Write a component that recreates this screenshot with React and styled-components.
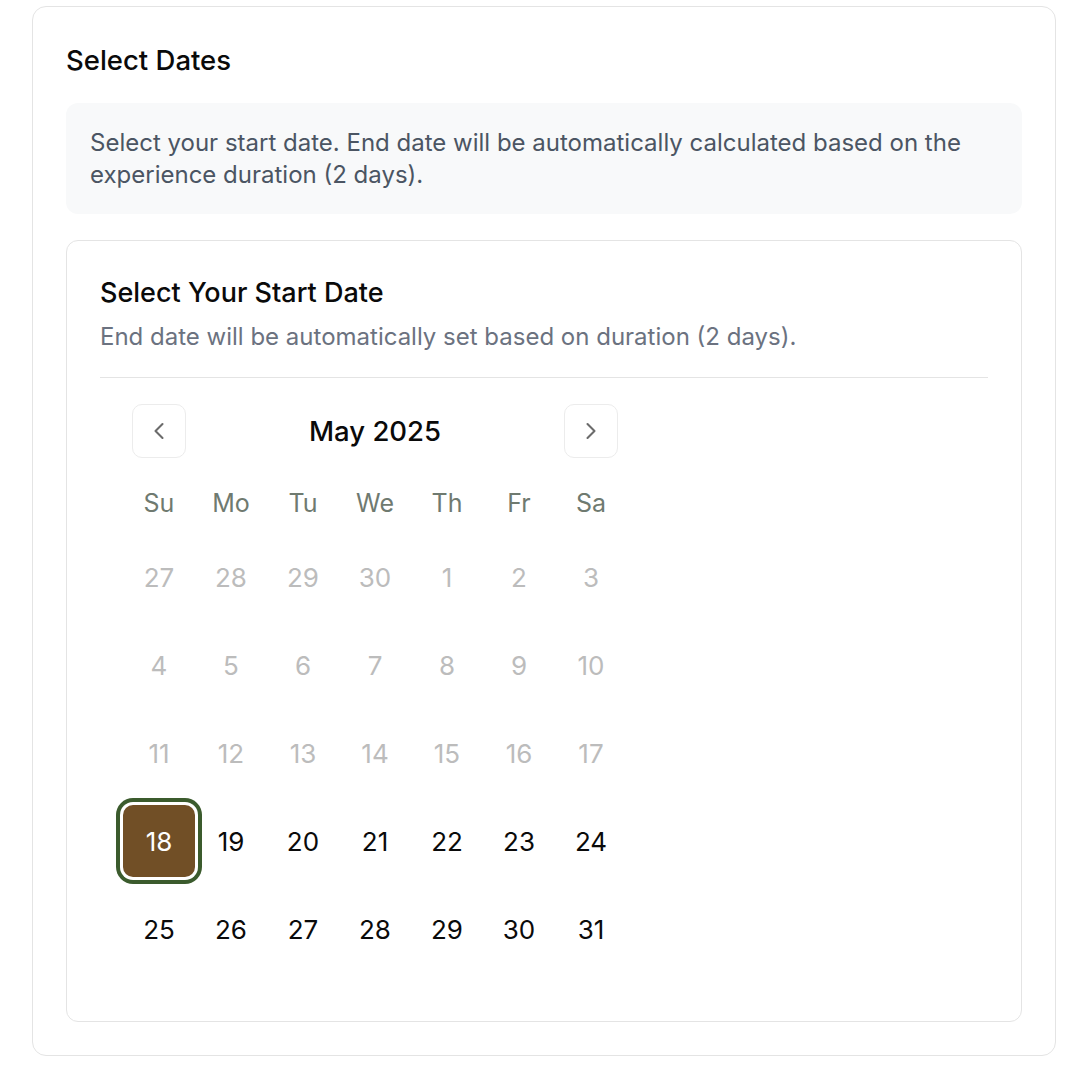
import React, { useState } from "react";
import styled, { createGlobalStyle } from "styled-components";

const GlobalStyle = createGlobalStyle`
  body {
    margin: 0;
    background: #ffffff;
    font-family: Inter, "Noto Sans", sans-serif;
    color: #0a0a0a;
  }
`;

const Page = styled.div`
  padding: 6px 22px 14px 32px;
`;

const Card = styled.section`
  width: 1024px;
  box-sizing: border-box;
  border: 1px solid #e4e4e4;
  border-radius: 14px;
  padding: 33px;
`;

const Title = styled.h2`
  margin: 0;
  font-size: 27.5px;
  line-height: 40px;
  font-weight: 500;
`;

const Info = styled.div`
  margin-top: 23px;
  background: #f8f9fa;
  border-radius: 12px;
  padding: 24px 24px 23px;
  font-size: 24px;
  line-height: 32px;
  color: #4b5563;
`;

const InnerCard = styled.div`
  margin-top: 26px;
  border: 1px solid #e4e4e4;
  border-radius: 12px;
  padding: 33px;
`;

const InnerTitle = styled.h3`
  margin: 0;
  font-size: 27px;
  line-height: 38px;
  font-weight: 500;
`;

const Sub = styled.p`
  margin: 10px 0 0;
  font-size: 24px;
  line-height: 30px;
  color: #6b7280;
`;

const Divider = styled.hr`
  margin: 25px 0 0;
  border: 0;
  border-top: 1px solid #e4e4e4;
`;

const Calendar = styled.div`
  padding: 26px 23px 23px;
  width: 504px;
`;

const Nav = styled.div`
  display: flex;
  align-items: center;
  justify-content: space-between;
  padding: 0 9px;
  height: 54px;
`;

const NavButton = styled.button`
  width: 54px;
  height: 54px;
  box-sizing: border-box;
  border: 1.5px solid #ececec;
  border-radius: 10px;
  background: #fff;
  display: flex;
  align-items: center;
  justify-content: center;
  padding: 0;
  color: #6b6b6b;
  cursor: pointer;
`;

const Month = styled.div`
  font-size: 27.5px;
  font-weight: 500;
  color: #0a0a0a;
`;

const Grid = styled.div`
  display: grid;
  grid-template-columns: repeat(7, 72px);
  row-gap: 16px;
  margin-top: 23px;
`;

const Weekday = styled.div`
  height: 44px;
  display: flex;
  align-items: center;
  justify-content: center;
  font-size: 25px;
  color: #6f7a70;
`;

const Day = styled.button`
  width: 72px;
  height: 72px;
  border: 0;
  padding: 0;
  border-radius: 10px;
  font-family: inherit;
  font-size: 26px;
  background: ${(p) => (p.$selected ? "#714f26" : "transparent")};
  color: ${(p) => (p.$selected ? "#ffffff" : p.$muted ? "#bcbcbc" : "#0a0a0a")};
  box-shadow: ${(p) =>
    p.$selected ? "0 0 0 3px #ffffff, 0 0 0 7px #3b5b2d" : "none"};
  cursor: ${(p) => (p.$muted ? "default" : "pointer")};
`;

const Chevron = ({ dir }) => (
  <svg width="28" height="28" viewBox="0 0 24 24" fill="none" stroke="currentColor" strokeWidth="1.8" strokeLinecap="round" strokeLinejoin="round">
    {dir === "left" ? <path d="M15 18l-6-6 6-6" /> : <path d="M9 18l6-6-6-6" />}
  </svg>
);

const weekdays = ["Su", "Mo", "Tu", "We", "Th", "Fr", "Sa"];

const days = [
  ...[27, 28, 29, 30].map((d) => ({ d, muted: true })),
  ...Array.from({ length: 31 }, (_, i) => ({ d: i + 1, muted: i + 1 < 18 })),
];

export default function App() {
  const [selected, setSelected] = useState(18);

  return (
    <Page>
      <GlobalStyle />
      <Card>
        <Title>Select Dates</Title>
        <Info>
          Select your start date. End date will be automatically calculated based on the
          experience duration (2 days).
        </Info>
        <InnerCard>
          <InnerTitle>Select Your Start Date</InnerTitle>
          <Sub>End date will be automatically set based on duration (2 days).</Sub>
          <Divider />
          <Calendar>
            <Nav>
              <NavButton aria-label="Previous month">
                <Chevron dir="left" />
              </NavButton>
              <Month>May 2025</Month>
              <NavButton aria-label="Next month">
                <Chevron dir="right" />
              </NavButton>
            </Nav>
            <Grid>
              {weekdays.map((w) => (
                <Weekday key={w}>{w}</Weekday>
              ))}
              {days.map((day, i) => (
                <Day
                  key={i}
                  $muted={day.muted}
                  $selected={!day.muted && day.d === selected}
                  onClick={() => !day.muted && setSelected(day.d)}
                >
                  {day.d}
                </Day>
              ))}
            </Grid>
          </Calendar>
        </InnerCard>
      </Card>
    </Page>
  );
}
